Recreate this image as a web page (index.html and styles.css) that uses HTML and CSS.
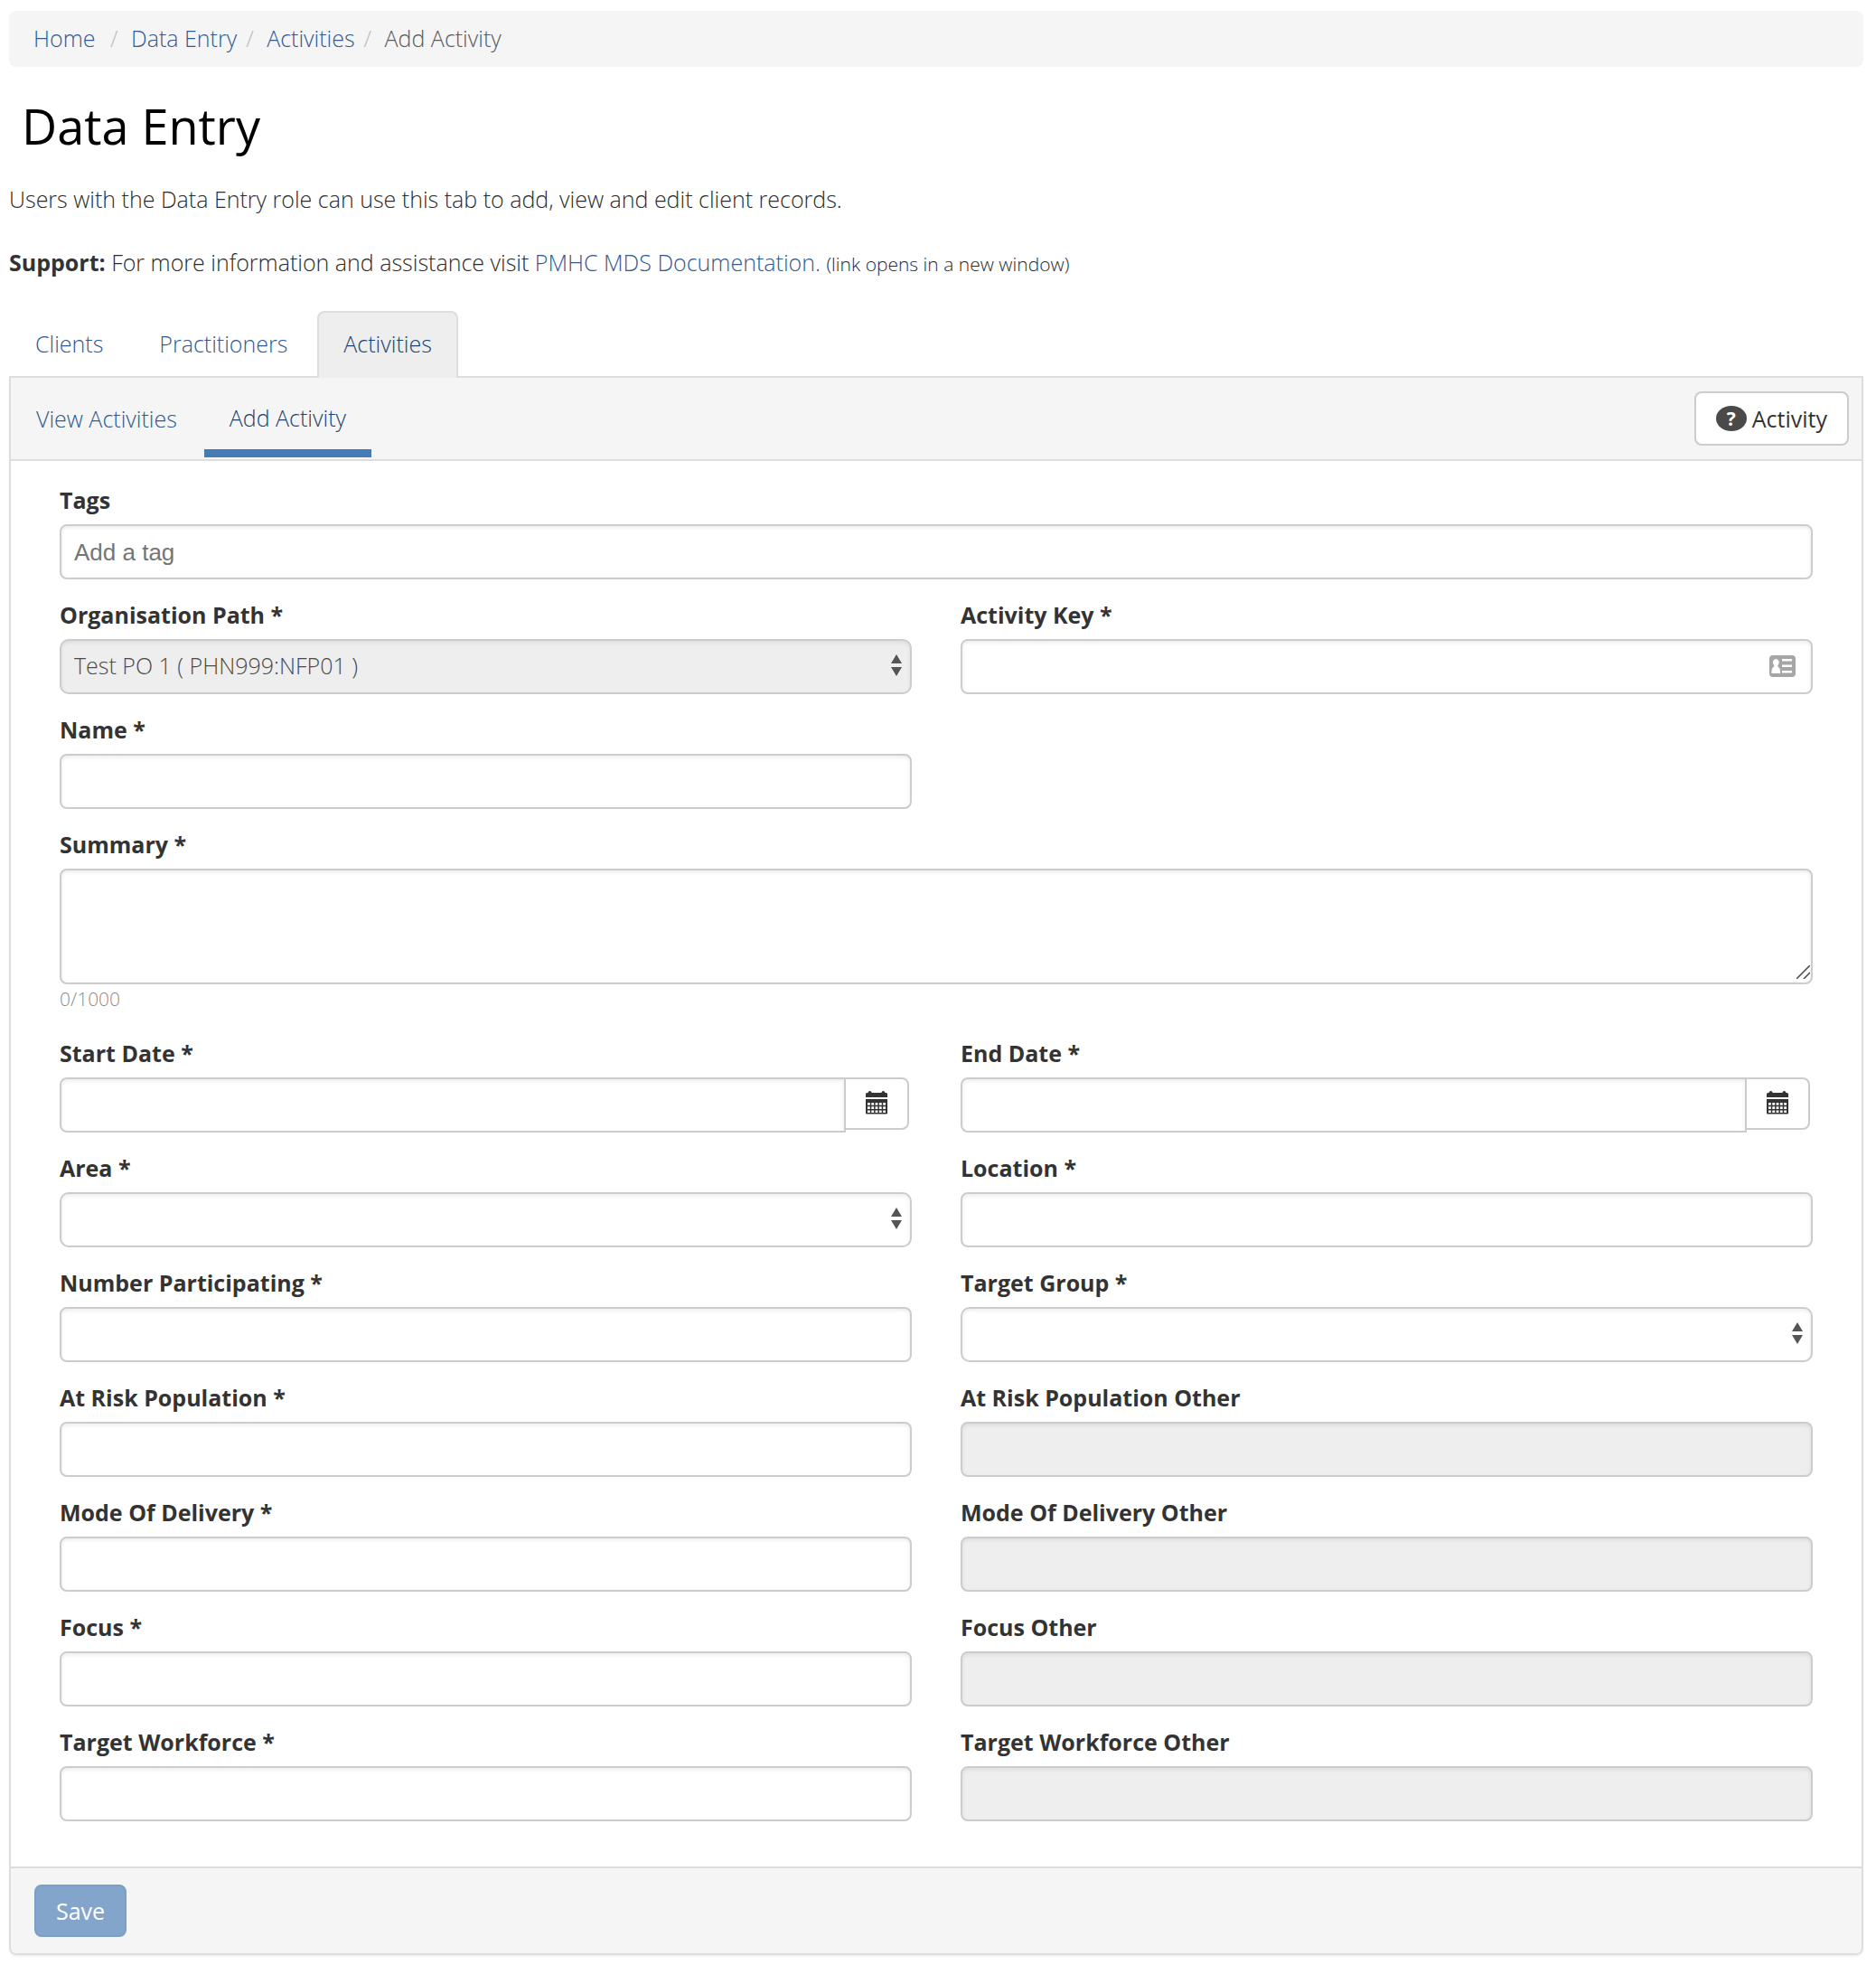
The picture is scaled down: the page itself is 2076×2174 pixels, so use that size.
FILE: index.html
```html
<!DOCTYPE html>
<html lang="en">
<head>
<meta charset="utf-8">
<meta name="viewport" content="width=device-width, initial-scale=1">
<title>Add Activity - Data Entry</title>
<link rel="stylesheet" href="styles.css">
</head>
<body>
<svg class="sprite" aria-hidden="true">
  <symbol id="i-updown" viewBox="0 0 12 24"><path d="M6 0l6 10H0zM6 24L0 14h12z"/></symbol>
  <symbol id="i-calendar" viewBox="0 0 24 26">
    <path d="M0 7V3.500Q0 2 1.500 2H2.500Q3 0 4.600 0T6.700 2H17.300Q17.800 0 19.400 0T21.500 2H22.500Q24 2 24 3.500V7z"/>
    <path fill-rule="evenodd" d="M0 9h24v15.500q0 1-1 1H1q-1 0-1-1zM2 13v2.800h2.800V13zm4.300 0v2.800h2.800V13zm4.300 0v2.800h2.800V13zm4.300 0v2.800h2.800V13zm4.300 0v2.800H22V13zM2 17.300v2.800h2.800v-2.800zm4.300 0v2.800h2.800v-2.800zm4.300 0v2.800h2.800v-2.800zm4.300 0v2.800h2.800v-2.800zm4.300 0v2.800H22v-2.800zM2 21.600v2.400h2.800v-2.400zm4.300 0v2.400h2.800v-2.400zm4.300 0v2.400h2.800v-2.400zm4.300 0v2.400h2.800v-2.400zm4.300 0v2.400H22v-2.400z"/>
  </symbol>
</svg>

<nav aria-label="Breadcrumb">
  <ol class="breadcrumb">
    <li><a href="#">Home</a>&nbsp;</li>
    <li><a href="#">Data Entry</a></li>
    <li><a href="#">Activities</a></li>
    <li aria-current="page">Add Activity</li>
  </ol>
</nav>

<main>
  <h1 class="title">Data Entry</h1>
  <p class="intro">Users with the Data Entry role can use this tab to add, view and edit client records.</p>
  <p class="intro"><strong>Support:</strong> For more information and assistance visit <a href="#">PMHC MDS Documentation.</a> <small>(link opens in a new window)</small></p>

  <nav class="tabs" aria-label="Data entry sections">
    <a class="tab" href="#">Clients</a>
    <a class="tab" href="#">Practitioners</a>
    <a class="tab tab-active" href="#">Activities</a>
  </nav>

  <form class="panel">
    <div class="panel-head">
      <nav class="subnav" aria-label="Activities">
        <a class="sublink" href="#">View Activities</a>
        <a class="sublink sublink-active" href="#">Add Activity</a>
      </nav>
      <button class="btn help" type="button"><span class="help-mark">?</span>Activity</button>
    </div>

    <div class="fields">
      <div class="field wide">
        <label for="tags">Tags</label>
        <input class="control tags" id="tags" type="text" placeholder="Add a tag">
      </div>
      <div class="field">
        <label for="org">Organisation Path *</label>
        <div class="box">
          <select class="control select" id="org" disabled><option>Test PO 1 ( PHN999:NFP01 )</option></select>
          <svg class="arrows" aria-hidden="true"><use href="#i-updown"/></svg>
        </div>
      </div>
      <div class="field">
        <label for="key">Activity Key *</label>
        <div class="box">
          <input class="control" id="key" type="text">
          <svg class="card" viewBox="0 0 29 24" aria-hidden="true">
            <rect width="29" height="24" rx="4" fill="#a6a6a6"/>
            <path fill="#fff" d="M7.300 4a3.600 4 0 0 1 2 7.200v1.300q2.700 1.300 2.700 4.500v3H2.500v-3q0-3.200 2.700-4.500v-1.300A3.600 4 0 0 1 7.300 4zM14 4h11v2.500H14zM14 10.500h11V13H14zM14 17h11v2.500H14z"/>
          </svg>
        </div>
      </div>
      <div class="field start">
        <label for="name">Name *</label>
        <input class="control" id="name" type="text">
      </div>
      <div class="field wide">
        <label for="summary">Summary *</label>
        <div class="box">
          <textarea class="control summary" id="summary"></textarea>
          <svg class="grip" viewBox="0 0 15 15" aria-hidden="true"><path d="M0 15L15 0M8 15L15 8"/></svg>
        </div>
        <span class="counter">0/1000</span>
      </div>
      <div class="field">
        <label for="start">Start Date *</label>
        <div class="date">
          <input class="control" id="start" type="text">
          <button class="btn pick" type="button" aria-label="Choose start date"><svg class="cal"><use href="#i-calendar"/></svg></button>
        </div>
      </div>
      <div class="field">
        <label for="end">End Date *</label>
        <div class="date">
          <input class="control" id="end" type="text">
          <button class="btn pick" type="button" aria-label="Choose end date"><svg class="cal"><use href="#i-calendar"/></svg></button>
        </div>
      </div>
      <div class="field">
        <label for="area">Area *</label>
        <div class="box">
          <select class="control select" id="area"><option></option></select>
          <svg class="arrows" aria-hidden="true"><use href="#i-updown"/></svg>
        </div>
      </div>
      <div class="field">
        <label for="location">Location *</label>
        <input class="control" id="location" type="text">
      </div>
      <div class="field">
        <label for="number">Number Participating *</label>
        <input class="control" id="number" type="text">
      </div>
      <div class="field">
        <label for="group">Target Group *</label>
        <div class="box">
          <select class="control select" id="group"><option></option></select>
          <svg class="arrows" aria-hidden="true"><use href="#i-updown"/></svg>
        </div>
      </div>
      <div class="field">
        <label for="risk">At Risk Population *</label>
        <input class="control" id="risk" type="text">
      </div>
      <div class="field">
        <label for="risk-other">At Risk Population Other</label>
        <input class="control" id="risk-other" type="text" disabled>
      </div>
      <div class="field">
        <label for="mode">Mode Of Delivery *</label>
        <input class="control" id="mode" type="text">
      </div>
      <div class="field">
        <label for="mode-other">Mode Of Delivery Other</label>
        <input class="control" id="mode-other" type="text" disabled>
      </div>
      <div class="field">
        <label for="focus">Focus *</label>
        <input class="control" id="focus" type="text">
      </div>
      <div class="field">
        <label for="focus-other">Focus Other</label>
        <input class="control" id="focus-other" type="text" disabled>
      </div>
      <div class="field">
        <label for="workforce">Target Workforce *</label>
        <input class="control" id="workforce" type="text">
      </div>
      <div class="field">
        <label for="workforce-other">Target Workforce Other</label>
        <input class="control" id="workforce-other" type="text" disabled>
      </div>
    </div>

    <div class="panel-foot">
      <button class="btn save" type="submit" disabled>Save</button>
    </div>
  </form>
</main>
</body>
</html>
```
FILE: styles.css
```css
* { box-sizing: border-box; }

body {
  margin: 0;
  padding: 12px 14px 12px 10px;
  background: #fff;
  color: #2b2b2b;
  font: 300 25px/36px "Open Sans", "Noto Sans", sans-serif;
}

a { color: #325991; text-decoration: none; }
strong { color: #333; font-weight: 700; }
small { font-size: 21px; }
.sprite { display: none; }

.breadcrumb {
  display: flex;
  margin: 0;
  padding: 12px 27px 14px;
  border-radius: 8px;
  background: #f5f5f5;
  color: #5a5a5a;
  list-style: none;
}
.breadcrumb li + li::before {
  content: "/\00a0";
  padding: 0 8px 0 10px;
  color: #bbb;
}

.title {
  margin: 35px 0 33px 14px;
  color: #000;
  font-size: 54px;
  font-weight: 400;
  line-height: 60px;
}
.intro { margin: 0 0 34px; }

.tabs { display: flex; gap: 4px; margin-bottom: -2px; }
.tab {
  padding: 16px 27px 20px;
  border: 2px solid transparent;
  border-bottom: 0;
  border-radius: 8px 8px 0 0;
}
.tab-active {
  position: relative;
  border-color: #ddd;
  background: #eee;
  color: #1f436c;
}

.panel {
  border: 2px solid #ddd;
  border-radius: 0 0 8px 8px;
  box-shadow: 0 2px 2px rgba(0, 0, 0, .05);
}
.panel-head {
  display: flex;
  align-items: center;
  justify-content: space-between;
  height: 92px;
  padding-right: 14px;
  border-bottom: 2px solid #ddd;
  background: #f5f5f5;
}
.subnav { display: flex; align-items: center; align-self: stretch; gap: 2px; }
.sublink { padding: 0 28px; }
.sublink-active {
  align-self: flex-end;
  margin-bottom: 2px;
  padding-bottom: 17px;
  border-bottom: 9px solid #457bb7;
  color: #1f436c;
}

.btn {
  display: flex;
  align-items: center;
  justify-content: center;
  border: 2px solid #ccc;
  border-radius: 8px;
  background: #fff;
  color: #333;
  font: inherit;
  font-weight: 400;
}
.help { gap: 6px; height: 60px; padding: 0 22px; }
.help-mark {
  width: 34px;
  height: 28px;
  border-radius: 50%;
  background: #4a4a4a;
  color: #fff;
  font-size: 21px;
  font-weight: 700;
  line-height: 28px;
}

.fields {
  display: grid;
  grid-template-columns: 1fr 1fr;
  gap: 21px 54px;
  padding: 25px 54px 50px;
}
.field { display: flex; flex-direction: column; gap: 9px; min-width: 0; }
.field label { color: #333; font-weight: 700; }
.wide { grid-column: 1 / -1; }
.start { grid-column: 1; }

.control {
  display: block;
  width: 100%;
  height: 61px;
  margin: 0;
  padding: 0 14px;
  border: 2px solid #ccc;
  border-radius: 8px;
  background: #fff;
  box-shadow: inset 0 2px 4px rgba(0, 0, 0, .08);
  color: #4a4a4a;
  font: inherit;
}
.control:disabled { background: #eee; opacity: 1; }
.tags {
  padding-top: 2px;
  font-family: "Liberation Sans", Arial, sans-serif;
  font-size: 26px;
  font-weight: 400;
}
.tags::placeholder { color: #757575; }
.select { padding-bottom: 3px; border-radius: 10px; appearance: none; }
.summary { height: 128px; resize: none; }
.counter { margin: -11px 0 3px; color: #8c8c8c; font-size: 21px; }

.box { position: relative; }
.arrows {
  position: absolute;
  top: 17px;
  right: 11px;
  width: 12px;
  height: 24px;
  fill: #555;
  pointer-events: none;
}
.card { position: absolute; top: 18px; right: 19px; width: 29px; height: 24px; }
.grip {
  position: absolute;
  right: 3px;
  bottom: 6px;
  width: 15px;
  height: 15px;
  stroke: #444;
  stroke-width: 1.5;
  pointer-events: none;
}

.date { display: flex; align-items: flex-start; padding-right: 3px; }
.date .control { flex: 1; border-radius: 8px 0 0 8px; }
.pick {
  width: 72px;
  height: 58px;
  margin-left: -2px;
  padding: 0 0 2px;
  border-radius: 0 8px 8px 0;
}
.cal { width: 24px; height: 26px; fill: #333; }

.panel-foot {
  padding: 18px 26px;
  border-top: 2px solid #ddd;
  border-radius: 0 0 6px 6px;
  background: #f5f5f5;
}
.save {
  width: 102px;
  height: 58px;
  padding: 0;
  border-color: #7c9fc5;
  background: #84a5cb;
  color: #fff;
}
```
